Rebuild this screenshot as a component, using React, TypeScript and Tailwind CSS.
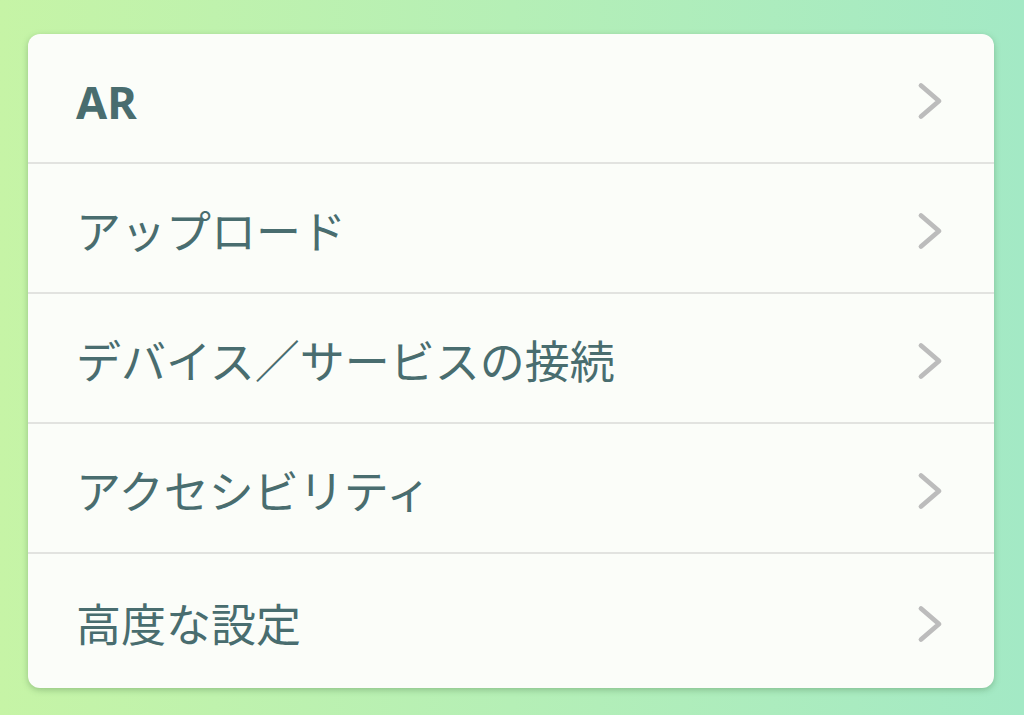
import React from 'react';

const items = [
  { label: 'AR', bold: true },
  { label: 'アップロード' },
  { label: 'デバイス／サービスの接続' },
  { label: 'アクセシビリティ' },
  { label: '高度な設定' },
];

const Chevron: React.FC = () => (
  <svg width="27" height="38" viewBox="0 0 27 38" fill="none" className="shrink-0">
    <path d="M4 3.5 L22 19 L4 34.5" stroke="#bcbcbc" strokeWidth="4.8" strokeLinecap="round" strokeLinejoin="round" />
  </svg>
);

const App: React.FC = () => {
  return (
    <div
      className="w-[1024px] h-[715px] overflow-hidden bg-gradient-to-r from-[#c6f4a6] via-[#b5efb6] to-[#a3e9c5] pt-[34px] pl-[28px] pr-[30px]"
      style={{ fontFamily: '"Noto Sans", "Noto Sans CJK JP", sans-serif' }}
    >
      <div className="h-[654px] rounded-[12px] bg-[#fbfdf9] shadow-[0_2px_6px_rgba(60,110,60,0.35)] flex flex-col overflow-hidden">
        {items.map((item, i) => (
          <div
            key={item.label}
            className={`flex items-center justify-between pt-[6px] pl-[48px] pr-[50px] ${
              i < items.length - 1 ? 'h-[130px] border-b-2 border-[#e2e3e0]' : 'flex-1'
            }`}
          >
            <span
              className={`text-[45px] leading-none text-[#496d6f] ${item.bold ? 'font-bold' : 'font-normal'}`}
            >
              {item.label}
            </span>
            <Chevron />
          </div>
        ))}
      </div>
    </div>
  );
};

export default App;
